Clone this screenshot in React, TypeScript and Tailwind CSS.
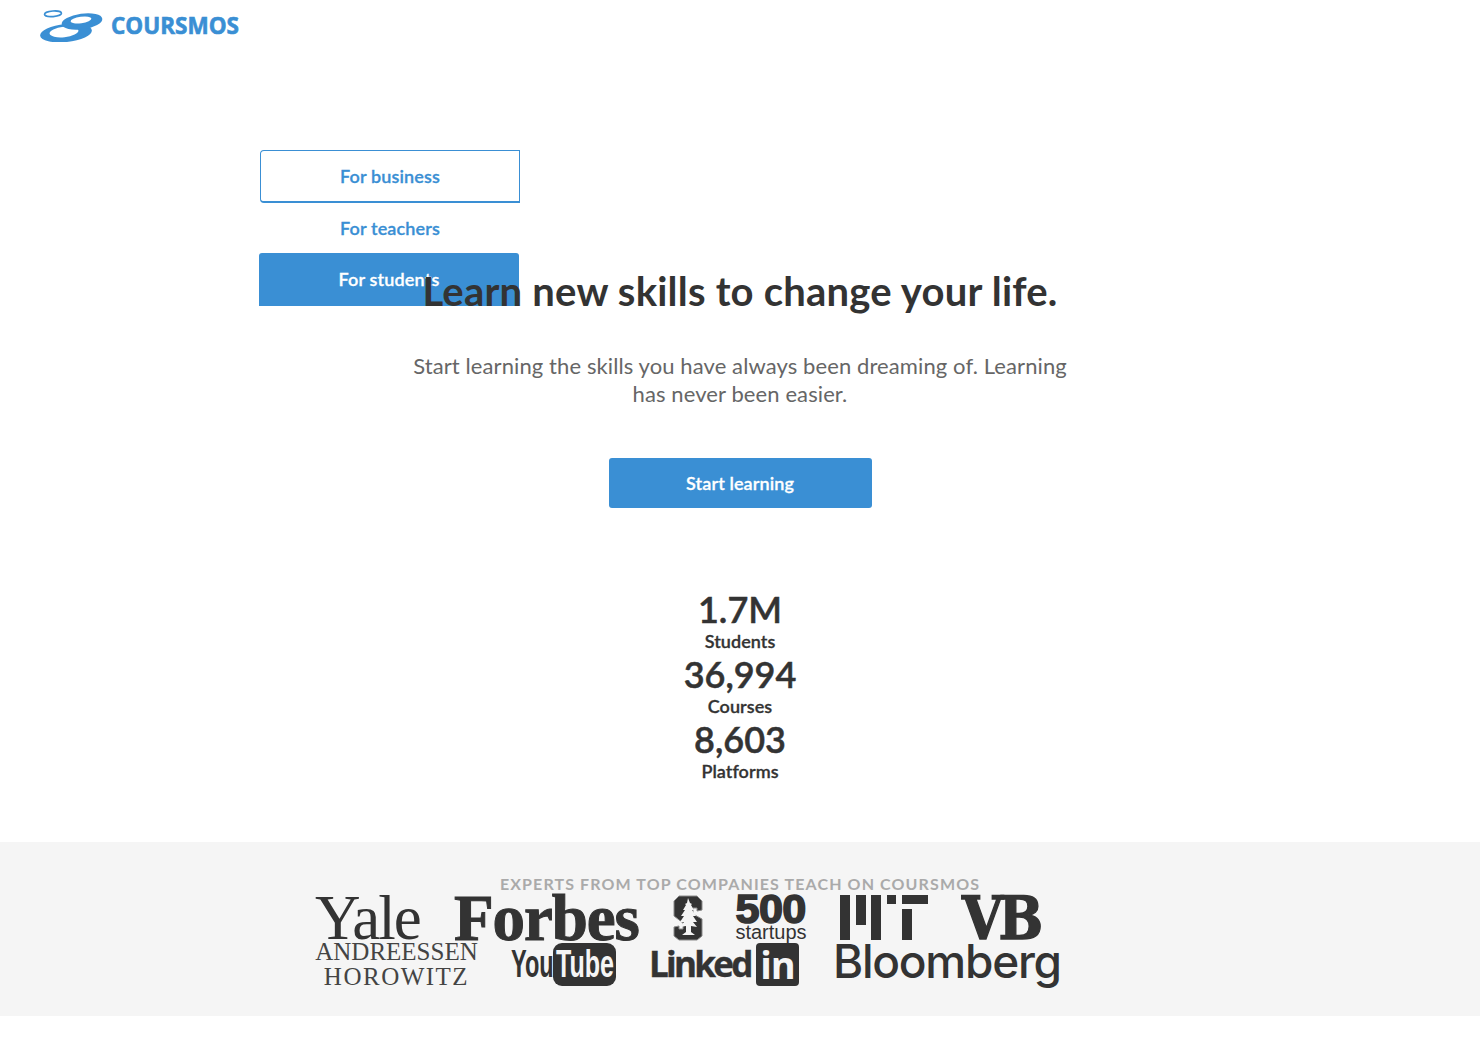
const lato = "font-['Lato','Noto_Sans',sans-serif]";

const CoursmosMark = () => (
  <svg width="64" height="32" viewBox="0 0 64 32" className="block">
    <ellipse cx="13" cy="3.8" rx="8.5" ry="2.8" fill="none" stroke="#3a8fd4" strokeWidth="1.6" transform="rotate(-4 13 3.8)" />
    <ellipse cx="26" cy="23" rx="26" ry="9" fill="#3a8fd4" transform="rotate(-6 26 23)" />
    <ellipse cx="24" cy="22" rx="14.5" ry="5.2" fill="#fff" transform="rotate(-6 24 22)" />
    <ellipse cx="42" cy="11.5" rx="20.5" ry="7.8" fill="#3a8fd4" transform="rotate(-8 42 11.5)" />
    <ellipse cx="41" cy="10" rx="10.5" ry="3.2" fill="#fff" transform="rotate(-8 41 10)" />
  </svg>
);

const StanfordLogo = () => (
  <svg width="30" height="46" viewBox="0 0 30 46" className="block">
    <path fill="#333" stroke="#8a8a8a" strokeWidth="1" d="M6 1h18l5 5v9l-5 1v-3l-4 0v6l9 5v17l-5 4H6l-5-4V32l5-1v3l4 0v-6L1 21V6z" />
    <path fill="#f4f4f4" d="M15 3l2 5 2 1-1 1 3 5-2 0 4 6-3 0 4 6-4 0 4 5-6-1v6l4 3H9l4-3v-6l-6 1 4-5-4 0 4-6-3 0 4-6-2 0 3-5-1-1 2-1z" />
  </svg>
);

const MitLogo = () => (
  <svg width="90" height="46" viewBox="0 0 90 46" className="block">
    <g fill="#333">
      <rect x="1" y="0" width="10" height="45" />
      <rect x="17" y="0" width="10" height="30" />
      <rect x="32" y="0" width="10" height="45" />
      <rect x="48" y="0" width="9" height="9" />
      <rect x="63" y="0" width="26" height="9" />
      <rect x="63" y="14" width="10" height="31" />
    </g>
  </svg>
);

const App = () => {
  return (
    <div className={`${lato} min-h-[1037px] bg-white text-[#333]`}>
      <header className="flex items-center h-[50px] pl-[40px] pt-[1px]">
        <CoursmosMark />
        <span className="ml-[7px] text-[22.5px] font-bold text-[#3a8fd4] font-['Open_Sans',sans-serif] [-webkit-text-stroke:0.6px_#3a8fd4]">COURSMOS</span>
      </header>

      <div className="relative h-[156px] mt-[100px] w-[260px] ml-[260px] text-[18px] font-semibold tracking-[0.15px] [-webkit-text-stroke:0.3px] z-0">
        <div className="h-[53px] flex items-center justify-center border border-b-2 border-[#3a8fd4] rounded-tl-[4px] rounded-bl-[4px] text-[#3a8fd4]">For business</div>
        <div className="h-[51px] flex items-center justify-center text-[#3a8fd4]">For teachers</div>
        <div className="h-[53px] w-[260px] -mt-[1px] -ml-[1px] flex items-center justify-center bg-[#3a8fd4] rounded-tl-[3px] rounded-tr-[3px] text-white">For students</div>
      </div>

      <section className="relative z-10 -mt-[38px] flex flex-col items-center">
        <h1 className="text-[40px] leading-[48px] font-bold tracking-[0.22px] text-[#333] -mt-[1px]">Learn new skills to change your life.</h1>
        <p className="mt-[37px] w-[680px] text-center text-[22px] leading-[28px] tracking-[0.1px] text-[#666]">
          Start learning the skills you have always been dreaming of. Learning has never been easier.
        </p>
        <button className="mt-[50px] w-[263px] h-[50px] rounded-[3px] bg-[#3a8fd4] text-white text-[18px] font-semibold tracking-[0.1px] [-webkit-text-stroke:0.3px]">Start learning</button>

        <div className="mt-[79px] flex flex-col items-center">
          {[
            ["1.7M", "Students"],
            ["36,994", "Courses"],
            ["8,603", "Platforms"],
          ].map(([num, label]) => (
            <div key={label} className="flex flex-col items-center h-[65px]">
              <span className="text-[36px] leading-[44px] font-semibold text-[#333] [-webkit-text-stroke:0.5px]">{num}</span>
              <span className="text-[18px] leading-[21px] font-semibold text-[#333] tracking-[0.05px] [-webkit-text-stroke:0.3px]">{label}</span>
            </div>
          ))}
        </div>
      </section>

      <section className="mt-[60px] h-[174px] bg-[#f5f5f5] pt-[32px]">
        <h2 className="text-center text-[16px] leading-[19px] font-bold tracking-[1.12px] text-[#aaa]">EXPERTS FROM TOP COMPANIES TEACH ON COURSMOS</h2>
        <div className="w-[850px] mx-auto mt-[2px] text-[#333]">
          <div className="flex gap-x-[33px] h-[46px] items-center">
            <span className="w-[106px] text-[63px] leading-[46px] font-['Liberation_Serif',serif] tracking-[-2px]">Yale</span>
            <span className="w-[186px] text-[65px] leading-[46px] font-bold font-['Liberation_Serif',serif] tracking-[-1.1px] [-webkit-text-stroke:1px_#333]">Forbes</span>
            <StanfordLogo />
            <div className="w-[70px] flex flex-col items-center">
              <span className="text-[40px] leading-[27px] font-bold font-['Liberation_Sans',sans-serif] [-webkit-text-stroke:1.5px_#333] tracking-[-0.5px] scale-x-[1.08]">500</span>
              <span className="text-[20px] leading-[18px] font-['Liberation_Sans',sans-serif]">startups</span>
            </div>
            <MitLogo />
            <span className="w-[80px] text-[60px] leading-[46px] font-bold font-['DejaVu_Serif',serif] tracking-[-5px] scale-x-[0.88] origin-left [-webkit-text-stroke:1.5px_#333]">VB</span>
          </div>
          <div className="flex gap-x-[33px] h-[46px] items-center">
            <div className="w-[163px] flex flex-col items-center font-['Liberation_Serif',serif] text-[25px] leading-[25px] text-[#444]">
              <span>ANDREESSEN</span>
              <span className="tracking-[1.5px]">HOROWITZ</span>
            </div>
            <div className="w-[105px] flex items-center">
              <span className="w-[42px] shrink-0 text-[38px] leading-[44px] font-bold font-['Liberation_Sans',sans-serif] scale-x-[0.62] origin-left">You</span>
              <span className="w-[63px] h-[43px] flex justify-center rounded-[9px] bg-[#333] text-[#f5f5f5] text-[38px] leading-[43px] font-bold font-['Liberation_Sans',sans-serif]"><span className="shrink-0 scale-x-[0.66]">Tube</span></span>
            </div>
            <div className="w-[151px] flex items-center">
              <span className="w-[101px] shrink-0 text-[35px] leading-[44px] font-bold font-['Open_Sans',sans-serif] tracking-[-2.7px] [-webkit-text-stroke:0.4px_#333]">Linked</span>
              <span className="ml-[6px] w-[43px] h-[43px] rounded-[4px] bg-[#333] text-[#f5f5f5] text-center text-[38px] leading-[43px] font-bold font-['Open_Sans',sans-serif] tracking-[-1px]">in</span>
            </div>
            <span className="w-[225px] text-[46px] leading-[44px] font-medium font-['Inter',sans-serif] tracking-[-1.25px] -mt-[7px]">Bloomberg</span>
          </div>
        </div>
      </section>
    </div>
  );
};

export default App;
